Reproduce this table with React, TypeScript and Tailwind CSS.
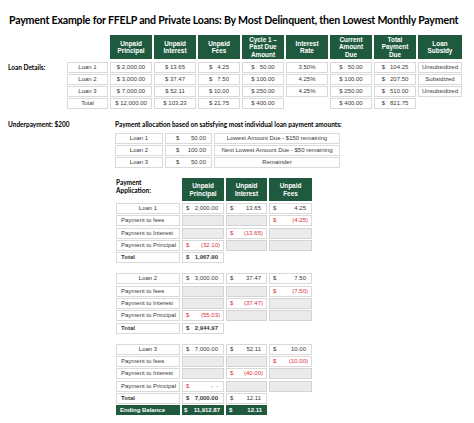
import clsx from 'clsx';
import type { ReactNode } from 'react';

const GREEN = 'bg-[#1f5a3e]';
const RED = 'text-[#e0303a]';

type Val = { v: string; neg?: boolean; bold?: boolean };

function Head({ children }: { children: ReactNode }) {
    return (
        <div
            className={clsx(
                GREEN,
                'flex h-full items-center justify-center text-center font-bold text-white text-[6.4px] leading-[7.2px]'
            )}
        >
            {children}
        </div>
    );
}

// plain bordered cell, text centred
function Box({ children, className }: { children?: ReactNode; className?: string }) {
    return (
        <div
            className={clsx(
                'flex h-full items-center justify-center whitespace-pre border border-[#d9d9d9] bg-white',
                className
            )}
        >
            {children}
        </div>
    );
}

// accounting style cell: "$" to the left, number to the right
function Money({ val, className }: { val?: Val; className?: string }) {
    if (!val) return <div className="h-full border border-[#d3d3d3] bg-[#ebebeb]" />;
    return (
        <div
            className={clsx(
                'flex h-full items-center justify-between whitespace-pre border border-[#d9d9d9] bg-white pl-[3px]',
                val.neg ? 'pr-[3px]' : 'pr-[5px]',
                val.neg && RED,
                val.bold && 'font-bold',
                className
            )}
        >
            <span>$</span>
            <span>{val.v}</span>
        </div>
    );
}

const topRows = [
    ['Loan 1', '$ 2,000.00', '$ 13.65', '$   4.25', '$   50.00', '3.50%', '$   50.00', '$   104.25', 'Unsubsidized'],
    ['Loan 2', '$ 3,000.00', '$ 37.47', '$   7.50', '$ 100.00', '4.25%', '$ 100.00', '$   207.50', 'Subsidized'],
    ['Loan 3', '$ 7,000.00', '$ 52.11', '$ 10.00', '$ 250.00', '4.25%', '$ 250.00', '$   510.00', 'Unsubsidized'],
    ['Total', '$ 12,000.00', '$ 103.23', '$ 21.75', '$ 400.00', '', '$ 400.00', '$   821.75', ''],
];

const heads = [
    'Unpaid\nPrincipal',
    'Unpaid\nInterest',
    'Unpaid\nFees',
    'Cycle 1 –\nPast Due\nAmount',
    'Interest\nRate',
    'Current\nAmount\nDue',
    'Total\nPayment\nDue',
    'Loan\nSubsidy',
];

const alloc = [
    ['Loan 1', '50.00', 'Lowest Amount Due - $150 remaining'],
    ['Loan 2', '100.00', 'Next Lowest Amount Due - $50 remaining'],
    ['Loan 3', '50.00', 'Remainder'],
];

type Section = {
    loan: string;
    start: [string, string, string];
    fees: string;
    interest: string;
    principal: string;
    total: string[];
};

const sections: Section[] = [
    { loan: 'Loan 1', start: ['2,000.00', '13.65', '4.25'], fees: '(4.25)', interest: '(13.65)', principal: '(32.10)', total: ['1,967.90'] },
    { loan: 'Loan 2', start: ['3,000.00', '37.47', '7.50'], fees: '(7.50)', interest: '(37.47)', principal: '(55.03)', total: ['2,944.97'] },
    { loan: 'Loan 3', start: ['7,000.00', '52.11', '10.00'], fees: '(10.00)', interest: '(40.00)', principal: '-  - ', total: ['7,000.00', '12.11'] },
];

const topGrid = 'grid grid-cols-[57px_41px_repeat(7,42px)_44px] gap-x-[2px]';
const payGrid = 'grid grid-cols-[64px_42px_41px_43px] gap-x-[2px]';

function PayRow({ label, cells, bold }: { label: string; cells: (Val | undefined | null)[]; bold?: boolean }) {
    return (
        <div className={clsx(payGrid, 'h-[10px]')}>
            <Box className={clsx('justify-start pl-[4px]', bold && 'font-bold')}>{label}</Box>
            {cells.map((c, i) => (c === null ? <div key={i} /> : <Money key={i} val={c} />))}
        </div>
    );
}

export default function App() {
    return (
        <div className="relative h-[423px] w-[474px] overflow-hidden bg-white font-['Liberation_Sans',Arial,sans-serif] text-[6px] text-[#3a3a3a]">
            {/* Title */}
            <h1 className="whitespace-nowrap pl-[9px] pt-[12px] font-['Lato',sans-serif] text-[10.6px] font-bold leading-[16px] tracking-[-0.2px] text-black">
                Payment Example for FFELP and Private Loans: By Most Delinquent, then Lowest Monthly Payment
            </h1>

            {/* Loan details table */}
            <div className="mt-[7px] flex flex-col pl-[8px]">
                <div className={clsx(topGrid, 'h-[24px]')}>
                    <div />
                    <div />
                    {heads.map((h) => (
                        <Head key={h}>
                            <span className="whitespace-pre-line">{h}</span>
                        </Head>
                    ))}
                </div>
                <div className="mt-[3px] flex flex-col gap-y-[2px]">
                    {topRows.map((r, ri) => (
                        <div key={r[0]} className={clsx(topGrid, 'h-[10px]')}>
                            <div className="flex items-center font-['Lato',sans-serif] text-[6.5px] font-bold text-black">
                                {ri === 0 ? 'Loan Details:' : ''}
                            </div>
                            {r.map((c, ci) =>
                                c === '' ? <div key={ci} /> : <Box key={ci}>{c}</Box>
                            )}
                        </div>
                    ))}
                </div>
            </div>

            {/* Underpayment allocation */}
            <div className="mt-[12px] flex h-[10px] items-center font-['Lato',sans-serif] text-[6.5px] font-bold text-black">
                <span className="w-[115px] pl-[8px]">Underpayment: $200</span>
                <span>Payment allocation based on satisfying most individual loan payment amounts:</span>
            </div>
            <div className="mt-[3px] flex flex-col gap-y-[2px] pl-[115px]">
                {alloc.map(([l, a, d]) => (
                    <div key={l} className="grid h-[10px] grid-cols-[48px_47px_126px] gap-x-[2px]">
                        <Box>{l}</Box>
                        <div className="flex h-full items-center justify-between border border-[#d9d9d9] pl-[10px] pr-[5px]">
                            <span>$</span>
                            <span>{a}</span>
                        </div>
                        <Box>{d}</Box>
                    </div>
                ))}
            </div>

            {/* Payment application */}
            <div className="mt-[11px] flex flex-col pl-[116px]">
                <div className={clsx(payGrid, 'h-[23px]')}>
                    <div className="pt-[1px] font-['Lato',sans-serif] text-[6.5px] font-bold leading-[8px] text-black">
                        Payment
                        <br />
                        Application:
                    </div>
                    <Head>Unpaid<br />Principal</Head>
                    <Head>Unpaid<br />Interest</Head>
                    <Head>Unpaid<br />Fees</Head>
                </div>

                {sections.map((s, si) => (
                    <div key={s.loan} className={clsx('flex flex-col gap-y-[2.35px]', si === 0 ? 'mt-[2px]' : 'mt-[11px]')}>
                        <div className={clsx(payGrid, 'h-[10px]')}>
                            <Box>{s.loan}</Box>
                            {s.start.map((v) => (
                                <Money key={v} val={{ v }} />
                            ))}
                        </div>
                        <PayRow label="Payment to fees" cells={[undefined, undefined, { v: s.fees, neg: true }]} />
                        <PayRow label="Payment to Interest" cells={[undefined, { v: s.interest, neg: true }, undefined]} />
                        <PayRow label="Payment to Principal" cells={[{ v: s.principal, neg: true }, undefined, undefined]} />
                        <PayRow
                            label="Total"
                            bold
                            cells={[
                                { v: s.total[0], bold: true },
                                s.total[1] ? { v: s.total[1] } : null,
                                null,
                            ]}
                        />
                        {si === 2 && (
                            <div className={clsx(payGrid, 'h-[10px] font-bold text-white')}>
                                <div className={clsx(GREEN, 'flex items-center pl-[4px]')}>Ending Balance</div>
                                <div className={clsx(GREEN, 'flex items-center justify-between pl-[2px] pr-[4px]')}>
                                    <span>$</span>
                                    <span>11,912.87</span>
                                </div>
                                <div className={clsx(GREEN, 'flex items-center justify-between pl-[3px] pr-[5px]')}>
                                    <span>$</span>
                                    <span>12.11</span>
                                </div>
                                <div />
                            </div>
                        )}
                    </div>
                ))}
            </div>
        </div>
    );
}
